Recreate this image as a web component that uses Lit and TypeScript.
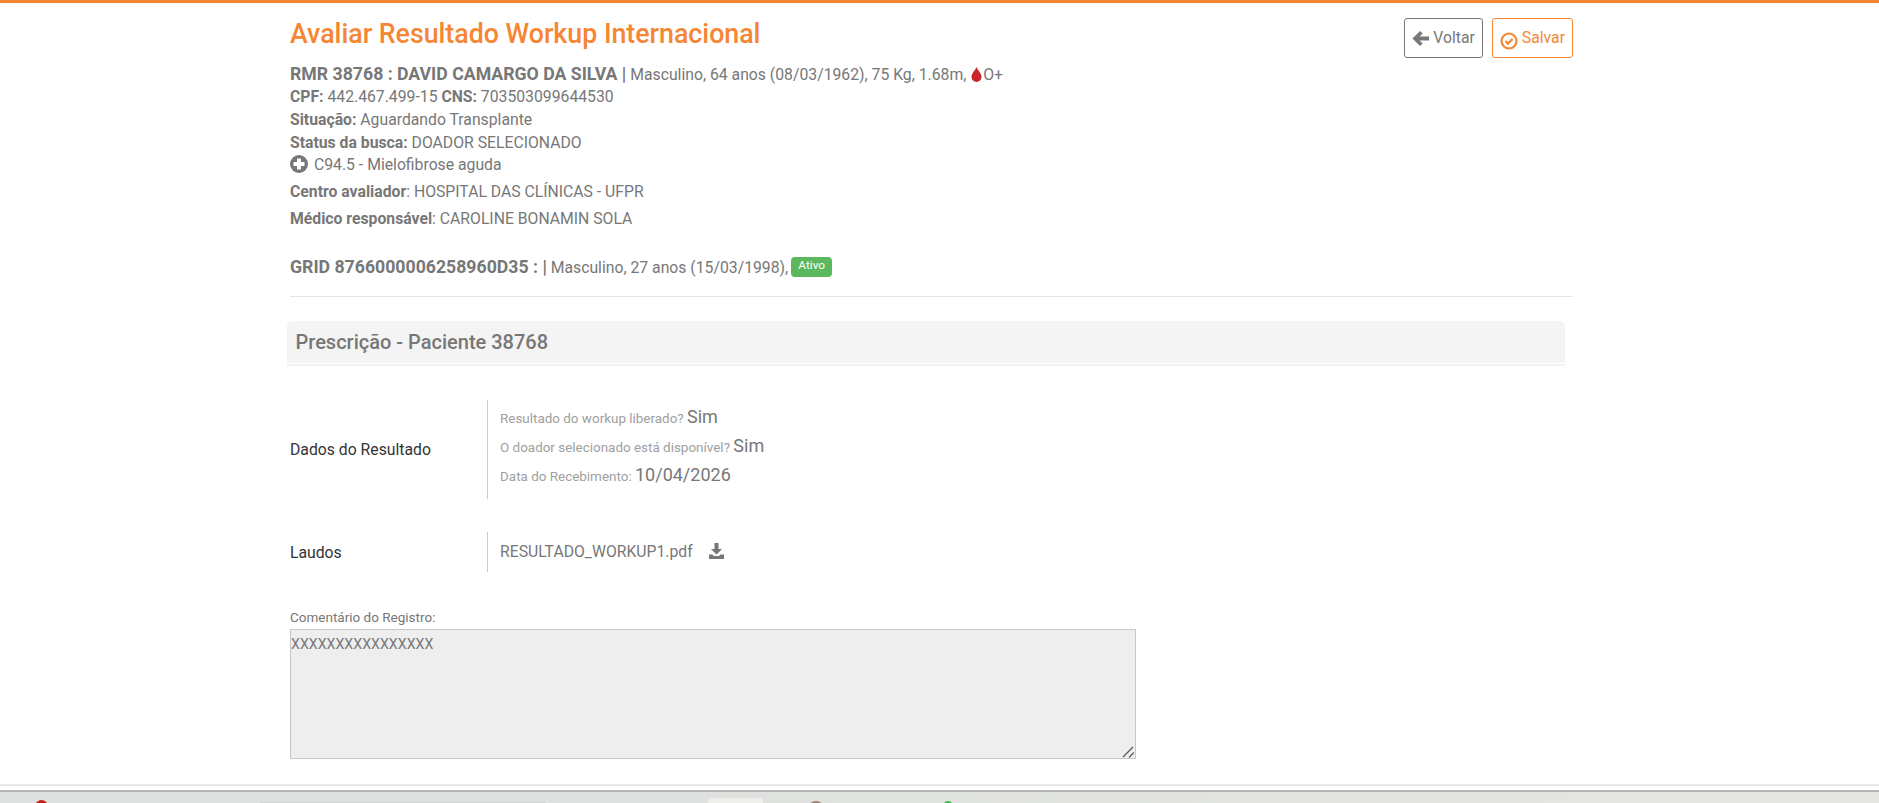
import { LitElement, html, css } from "lit";
import { customElement } from "lit/decorators.js";

@customElement("app-root")
export class AppRoot extends LitElement {
  static styles = css`
    :host {
      display: block;
      height: 803px;
      overflow: hidden;
      background: #fff;
      font-family: Roboto, "Liberation Sans", sans-serif;
      font-size: 15.75px;
      line-height: 22.8px;
      color: #777;
    }
    .page {
      height: 786px;
      box-sizing: border-box;
      border-top: 3px solid #f68633;
      border-bottom: 2px solid #e8e8e8;
      overflow: hidden;
    }
    .container {
      width: 1283px;
      margin-left: 290px;
    }
    .head {
      display: flex;
      justify-content: space-between;
      align-items: flex-start;
      height: 58px;
    }
    h1 {
      margin: 16px 0 0;
      font-size: 26.75px;
      line-height: 30px;
      font-weight: 500;
      color: #f68633;
    }
    .actions {
      display: flex;
      gap: 9px;
      margin-top: 15px;
    }
    .btn {
      display: flex;
      align-items: center;
      gap: 4px;
      height: 40px;
      box-sizing: border-box;
      padding: 0 7px;
      border: 1px solid #777;
      border-radius: 3px;
      color: #777;
    }
    .btn.save {
      border-color: #f68633;
      color: #f68633;
    }
    .btn.save svg {
      margin-top: 5px;
    }
    .patient {
      margin-top: 3px;
    }
    .patient div {
      height: 22.8px;
      white-space: nowrap;
    }
    .patient .first {
      height: 22px;
    }
    .big {
      font-size: 17.7px;
      line-height: 1;
      font-weight: 700;
    }
    .drop {
      vertical-align: -2px;
      margin-left: 1px;
      margin-right: 1px;
    }
    .patient .cid {
      display: flex;
      align-items: center;
      gap: 6px;
    }
    .cid svg {
      margin-top: -3px;
    }
    .patient .spaced {
      margin-top: 4px;
    }
    .grid-line {
      display: flex;
      align-items: center;
      gap: 3px;
      height: 22.8px;
      margin-top: 26px;
    }
    .label-ativo {
      display: flex;
      align-items: center;
      justify-content: center;
      box-sizing: border-box;
      width: 41px;
      height: 20px;
      padding-bottom: 3px;
      margin-top: -3px;
      background: #5cb85c;
      color: #fff;
      font-size: 11.8px;
      font-weight: 400;
      line-height: 14px;
      border-radius: 4px;
    }
    hr {
      border: 0;
      border-top: 1px solid #e5e5e5;
      margin: 16.8px 0 24px;
    }
    .section {
      width: 1278px;
      margin-left: -3px;
      height: 43px;
      box-sizing: border-box;
      padding-left: 8.5px;
      display: flex;
      align-items: center;
      background: #f4f4f4;
      background-clip: padding-box;
      border-radius: 5px 5px 0 0;
      font-size: 20px;
      font-weight: 500;
      color: #777;
      border-bottom: 1px solid #fff;
      box-shadow: 0 2px 0 #f2f2f2;
    }
    .row {
      display: flex;
      align-items: center;
    }
    .row-label {
      width: 197px;
      flex: none;
      padding-top: 2px;
      color: #333;
    }
    .row-body {
      border-left: 1px solid #ccc;
      padding-left: 12px;
    }
    .results {
      margin-top: 36px;
      height: 99px;
    }
    .results .row-body {
      height: 99px;
      box-sizing: border-box;
      padding-top: 2px;
    }
    .q {
      height: 29px;
      line-height: 29px;
      font-size: 13.45px;
      color: #a0a0a0;
      white-space: nowrap;
    }
    .q b {
      font-weight: 400;
      font-size: 18px;
      color: #777;
    }
    .files {
      margin-top: 33px;
      height: 40px;
    }
    .files .row-body {
      height: 40px;
      display: flex;
      align-items: center;
      gap: 16px;
      color: #777;
    }
    .files svg {
      margin-top: -2px;
    }
    .comment {
      position: relative;
      width: 846px;
      margin-top: 36px;
    }
    .comment label {
      display: block;
      font-size: 13.5px;
      line-height: 18px;
      color: #777;
      margin-bottom: 3px;
    }
    textarea {
      display: block;
      width: 846px;
      height: 130px;
      box-sizing: border-box;
      padding: 5px 0 0;
      margin: 0;
      background: #eee;
      border: 1px solid #c8c8c8;
      border-radius: 0;
      font-family: Roboto, "Liberation Sans", sans-serif;
      font-size: 14.2px;
      line-height: 18px;
      color: #777;
      outline: none;
      resize: none;
    }
    .grip {
      position: absolute;
      right: 2px;
      bottom: 1px;
      pointer-events: none;
    }
    .taskbar {
      height: 13px;
      box-sizing: border-box;
      position: relative;
      overflow: hidden;
      border-top: 2px solid #b2b4b2;
      margin-top: 4px;
      background: linear-gradient(90deg, #dce0df, #e0e2df 50%, #e6e7e2);
    }
    .tb-item {
      position: absolute;
    }
    .tb-red {
      left: 35px;
      top: 8px;
      width: 13px;
      height: 13px;
      border-radius: 50%;
      background: #c3231d;
    }
    .tb-search {
      left: 260px;
      top: 10px;
      width: 286px;
      height: 4px;
      background: #d4d7d6;
    }
    .tb-tab {
      left: 708px;
      top: 6px;
      width: 55px;
      height: 10px;
      border-radius: 4px 4px 0 0;
      background: #eff0ee;
    }
    .tb-brown {
      left: 808px;
      top: 9px;
      width: 16px;
      height: 14px;
      border-radius: 50%;
      background: #9a877c;
    }
    .tb-green {
      left: 943px;
      top: 9px;
      width: 10px;
      height: 10px;
      border-radius: 50%;
      background: #3ec24a;
    }
  `;

  render() {
    return html`
      <div class="page">
        <div class="container">
          <div class="head">
            <h1>Avaliar Resultado Workup Internacional</h1>
            <div class="actions">
              <div class="btn">
                <svg width="17" height="17" viewBox="0 0 18 17"><path fill="#777" d="M8.500 .5 .5 8.500l8 8 2.800-2.800L8 10.500h10v-4H8l3.300-3.200z" /></svg>
                Voltar
              </div>
              <div class="btn save">
                <svg width="18" height="18" viewBox="0 0 18 18"><circle cx="9" cy="9" r="7.500" fill="none" stroke="#f68633" stroke-width="2.200" /><path d="M5.500 9l2.500 2.500 4.500-4.500" fill="none" stroke="#f68633" stroke-width="2.400" /></svg>
                Salvar
              </div>
            </div>
          </div>
          <div class="patient">
            <div class="first">
              <span class="big">RMR 38768 : DAVID CAMARGO DA SILVA |</span>
              Masculino, 64 anos (08/03/1962), 75 Kg, 1.68m,
              <svg class="drop" width="11" height="15" viewBox="0 0 11 15"><path fill="#c9252b" d="M5.500 0C4.600 2.800 .5 6.200 .5 10a5 5 0 0 0 10 0C10.500 6.200 6.400 2.800 5.500 0z" /></svg>O+
            </div>
            <div><b>CPF:</b> 442.467.499-15 <b>CNS:</b> 703503099644530</div>
            <div><b>Situação:</b> Aguardando Transplante</div>
            <div><b>Status da busca:</b> DOADOR SELECIONADO</div>
            <div class="cid">
              <svg width="18" height="18" viewBox="0 0 18 18"><circle cx="9" cy="9" r="9" fill="#777" /><path fill="#fff" d="M7 3.500h4V7h3.500v4H11v3.500H7V11H3.500V7H7z" /></svg>
              C94.5 - Mielofibrose aguda
            </div>
            <div class="spaced"><b>Centro avaliador</b>: HOSPITAL DAS CLÍNICAS - UFPR</div>
            <div class="spaced"><b>Médico responsável</b>: CAROLINE BONAMIN SOLA</div>
          </div>
          <div class="grid-line">
            <span><span class="big">GRID 8766000006258960D35 : |</span> Masculino, 27 anos (15/03/1998),</span>
            <span class="label-ativo">Ativo</span>
          </div>
          <hr />
          <div class="section">Prescrição - Paciente 38768</div>
          <div class="row results">
            <div class="row-label">Dados do Resultado</div>
            <div class="row-body">
              <div class="q">Resultado do workup liberado? <b>Sim</b></div>
              <div class="q">O doador selecionado está disponível? <b>Sim</b></div>
              <div class="q">Data do Recebimento: <b>10/04/2026</b></div>
            </div>
          </div>
          <div class="row files">
            <div class="row-label">Laudos</div>
            <div class="row-body">
              RESULTADO_WORKUP1.pdf
              <svg width="15" height="16" viewBox="0 0 15 16"><path fill="#777" d="M5.500 0h4v6H13L7.500 11.500 2 6h3.500zM0 11.500h3.500l1.500 1.500h5l1.500-1.500H15V16H0z" /></svg>
            </div>
          </div>
          <div class="comment">
            <label>Comentário do Registro:</label>
            <textarea readonly .value=${"XXXXXXXXXXXXXXXX"}></textarea>
            <svg class="grip" width="12" height="12" viewBox="0 0 12 12"><path d="M1 11 11 1M7 11.500 12 6.500" stroke="#555" stroke-width="1.200" fill="none" /></svg>
          </div>
        </div>
      </div>
      <div class="taskbar">
        <span class="tb-item tb-red"></span>
        <span class="tb-item tb-search"></span>
        <span class="tb-item tb-tab"></span>
        <span class="tb-item tb-brown"></span>
        <span class="tb-item tb-green"></span>
      </div>
    `;
  }
}
